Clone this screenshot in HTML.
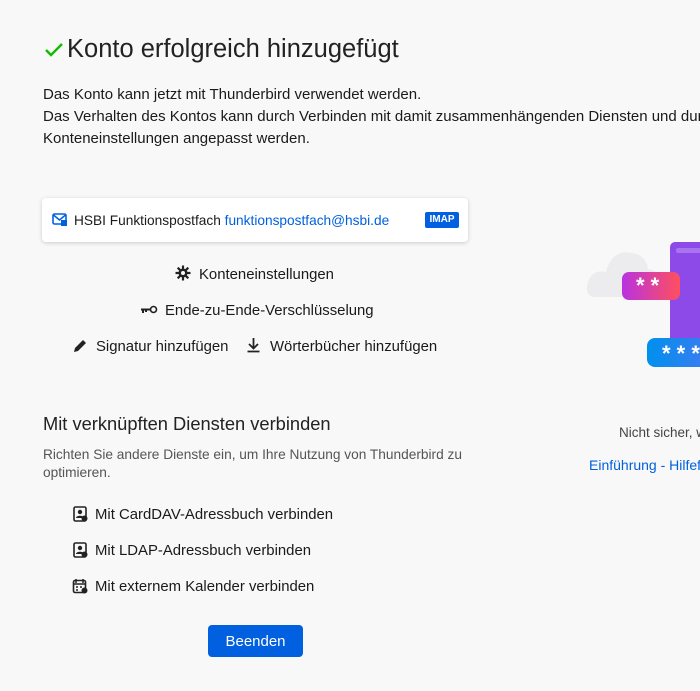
<!DOCTYPE html>
<html><head><meta charset="utf-8">
<style>
*{margin:0;padding:0;box-sizing:border-box}
html,body{width:700px;height:691px;overflow:hidden;background:#f8f8f8;font-family:"Liberation Sans",sans-serif;color:#1a1a1a}
.a{position:absolute;white-space:nowrap}
.t{font-size:14.9px}
svg{position:absolute}
</style></head><body>
<svg style="left:44px;top:42px" width="20" height="16" viewBox="0 0 20 16"><path d="M2 8 L7 13 L18 2" stroke="#12bc00" stroke-width="2.4" fill="none"/></svg>
<div class="a" style="left:67px;top:35px;font-size:25.5px;font-weight:300;color:#222">Konto erfolgreich hinzugefügt</div>
<div class="a" style="left:43px;top:84px;line-height:22px;font-size:15px">Das Konto kann jetzt mit Thunderbird verwendet werden.<br>Das Verhalten des Kontos kann durch Verbinden mit damit zusammenhängenden Diensten und durch<br>Konteneinstellungen angepasst werden.</div>

<div class="a" style="left:42px;top:198px;width:426px;height:44px;background:#fff;border-radius:4px;box-shadow:0 1px 4px rgba(0,0,0,.18)"></div>
<svg style="left:52px;top:212px" width="16" height="15" viewBox="0 0 16 15"><rect x="1" y="2" width="13" height="10" rx="1.5" fill="none" stroke="#0060df" stroke-width="1.6"/><path d="M1.5 3 L7.5 8 L13.5 3" stroke="#0060df" stroke-width="1.5" fill="none"/><rect x="9" y="8" width="6" height="6" fill="#0060df"/></svg>
<div class="a" style="left:74px;top:213px;font-size:13.7px">HSBI Funktionspostfach <span style="color:#0060df">funktionspostfach@hsbi.de</span></div>
<div class="a" style="left:425px;top:212px;width:34px;height:16px;background:#0060df;color:#fff;font-size:10px;font-weight:bold;text-align:center;line-height:16px;border-radius:2px">IMAP</div>

<svg style="left:175px;top:265px" width="16" height="16" viewBox="0 0 16 16"><g stroke="#222" stroke-width="2.2"><path d="M8 0.5v15M0.5 8h15M2.7 2.7l10.6 10.6M13.3 2.7L2.7 13.3"/></g><circle cx="8" cy="8" r="4.5" fill="#222"/><circle cx="8" cy="8" r="2" fill="#f8f8f8"/></svg>
<div class="a t" style="left:199px;top:267px">Konteneinstellungen</div>
<svg style="left:141px;top:305px" width="17" height="9" viewBox="0 0 17 9"><circle cx="12.5" cy="4.5" r="3" fill="none" stroke="#222" stroke-width="1.6"/><path d="M0 3.5h10v2H0zM1 5h2v3H1zM4 5h2v2H4z" fill="#222"/></svg>
<div class="a t" style="left:165px;top:303px">Ende-zu-Ende-Verschlüsselung</div>
<svg style="left:73px;top:338px" width="15" height="15" viewBox="0 0 15 15"><path d="M1 14 L2 10 L10 2 L13 5 L5 13 Z" fill="#222"/></svg>
<div class="a t" style="left:96px;top:339px">Signatur hinzufügen</div>
<svg style="left:246px;top:337px" width="15" height="16" viewBox="0 0 15 16"><path d="M7.5 1v10M3 7l4.5 4.5L12 7M1.5 14.5h12" stroke="#222" stroke-width="1.8" fill="none"/></svg>
<div class="a t" style="left:270px;top:339px">Wörterbücher hinzufügen</div>

<div class="a" style="left:43px;top:413px;font-size:18.3px;font-weight:300;color:#222">Mit verknüpften Diensten verbinden</div>
<div class="a" style="left:43px;top:446px;font-size:13.7px;color:#555;line-height:18px">Richten Sie andere Dienste ein, um Ihre Nutzung von Thunderbird zu<br>optimieren.</div>

<svg style="left:72px;top:506px" width="16" height="16" viewBox="0 0 16 16"><rect x="2" y="1" width="12" height="14" rx="1.5" fill="none" stroke="#222" stroke-width="1.6"/><circle cx="8" cy="6" r="2.2" fill="#222"/><path d="M4 12c0-3 8-3 8 0" fill="#222"/><circle cx="12.5" cy="12.5" r="3" fill="#222"/></svg>
<div class="a t" style="left:95px;top:507px">Mit CardDAV-Adressbuch verbinden</div>
<svg style="left:72px;top:542px" width="16" height="16" viewBox="0 0 16 16"><rect x="2" y="1" width="12" height="14" rx="1.5" fill="none" stroke="#222" stroke-width="1.6"/><circle cx="8" cy="6" r="2.2" fill="#222"/><path d="M4 12c0-3 8-3 8 0" fill="#222"/><circle cx="12.5" cy="12.5" r="3" fill="#222"/></svg>
<div class="a t" style="left:95px;top:543px">Mit LDAP-Adressbuch verbinden</div>
<svg style="left:72px;top:578px" width="16" height="16" viewBox="0 0 16 16"><rect x="1.5" y="2.5" width="12" height="12" rx="1.5" fill="none" stroke="#222" stroke-width="1.6"/><path d="M1.5 6h12M4 5V1M11 5V1M4 9h2M8 9h2M4 12h2" stroke="#222" stroke-width="1.5"/><circle cx="12.5" cy="12.5" r="3" fill="#222"/></svg>
<div class="a t" style="left:95px;top:579px">Mit externem Kalender verbinden</div>

<div class="a" style="left:208px;top:625px;width:95px;height:32px;background:#0060df;border-radius:4px;color:#fff;font-size:15px;text-align:center;line-height:33px">Beenden</div>

<svg style="left:580px;top:235px" width="120" height="140" viewBox="0 0 120 140">
<defs><linearGradient id="p" x1="0" x2="1"><stop offset="0" stop-color="#b833e1"/><stop offset="1" stop-color="#ff4f5e"/></linearGradient>
<linearGradient id="b" x1="0" x2="1"><stop offset="0" stop-color="#0090ed"/><stop offset="1" stop-color="#3a7cf0"/></linearGradient></defs>
<path d="M14 62 Q4 60 8 47 Q12 34 26 37 Q32 14 52 18 Q66 20 68 34 Q82 36 80 50 L62 62 Z" fill="#ececee"/>
<rect x="90" y="7" width="40" height="103" rx="5" fill="#8d4ae8"/>
<rect x="96" y="13" width="30" height="5" rx="2" fill="#a874f0"/>
<rect x="42" y="37" width="58" height="28" rx="7" fill="url(#p)"/>
<text x="56" y="58" fill="#fff" font-size="22" font-family="Liberation Sans" font-weight="bold">* *</text>
<rect x="67" y="103" width="60" height="29" rx="8" fill="url(#b)"/>
<text x="82" y="126" fill="#fff" font-size="22" font-family="Liberation Sans" font-weight="bold">* * *</text>
</svg>
<div class="a" style="left:619px;top:425px;font-size:13.5px;color:#444">Nicht sicher, w</div>
<div class="a" style="left:589px;top:457px;font-size:14px;color:#0060df">Einführung - Hilfef</div>
</body></html>
